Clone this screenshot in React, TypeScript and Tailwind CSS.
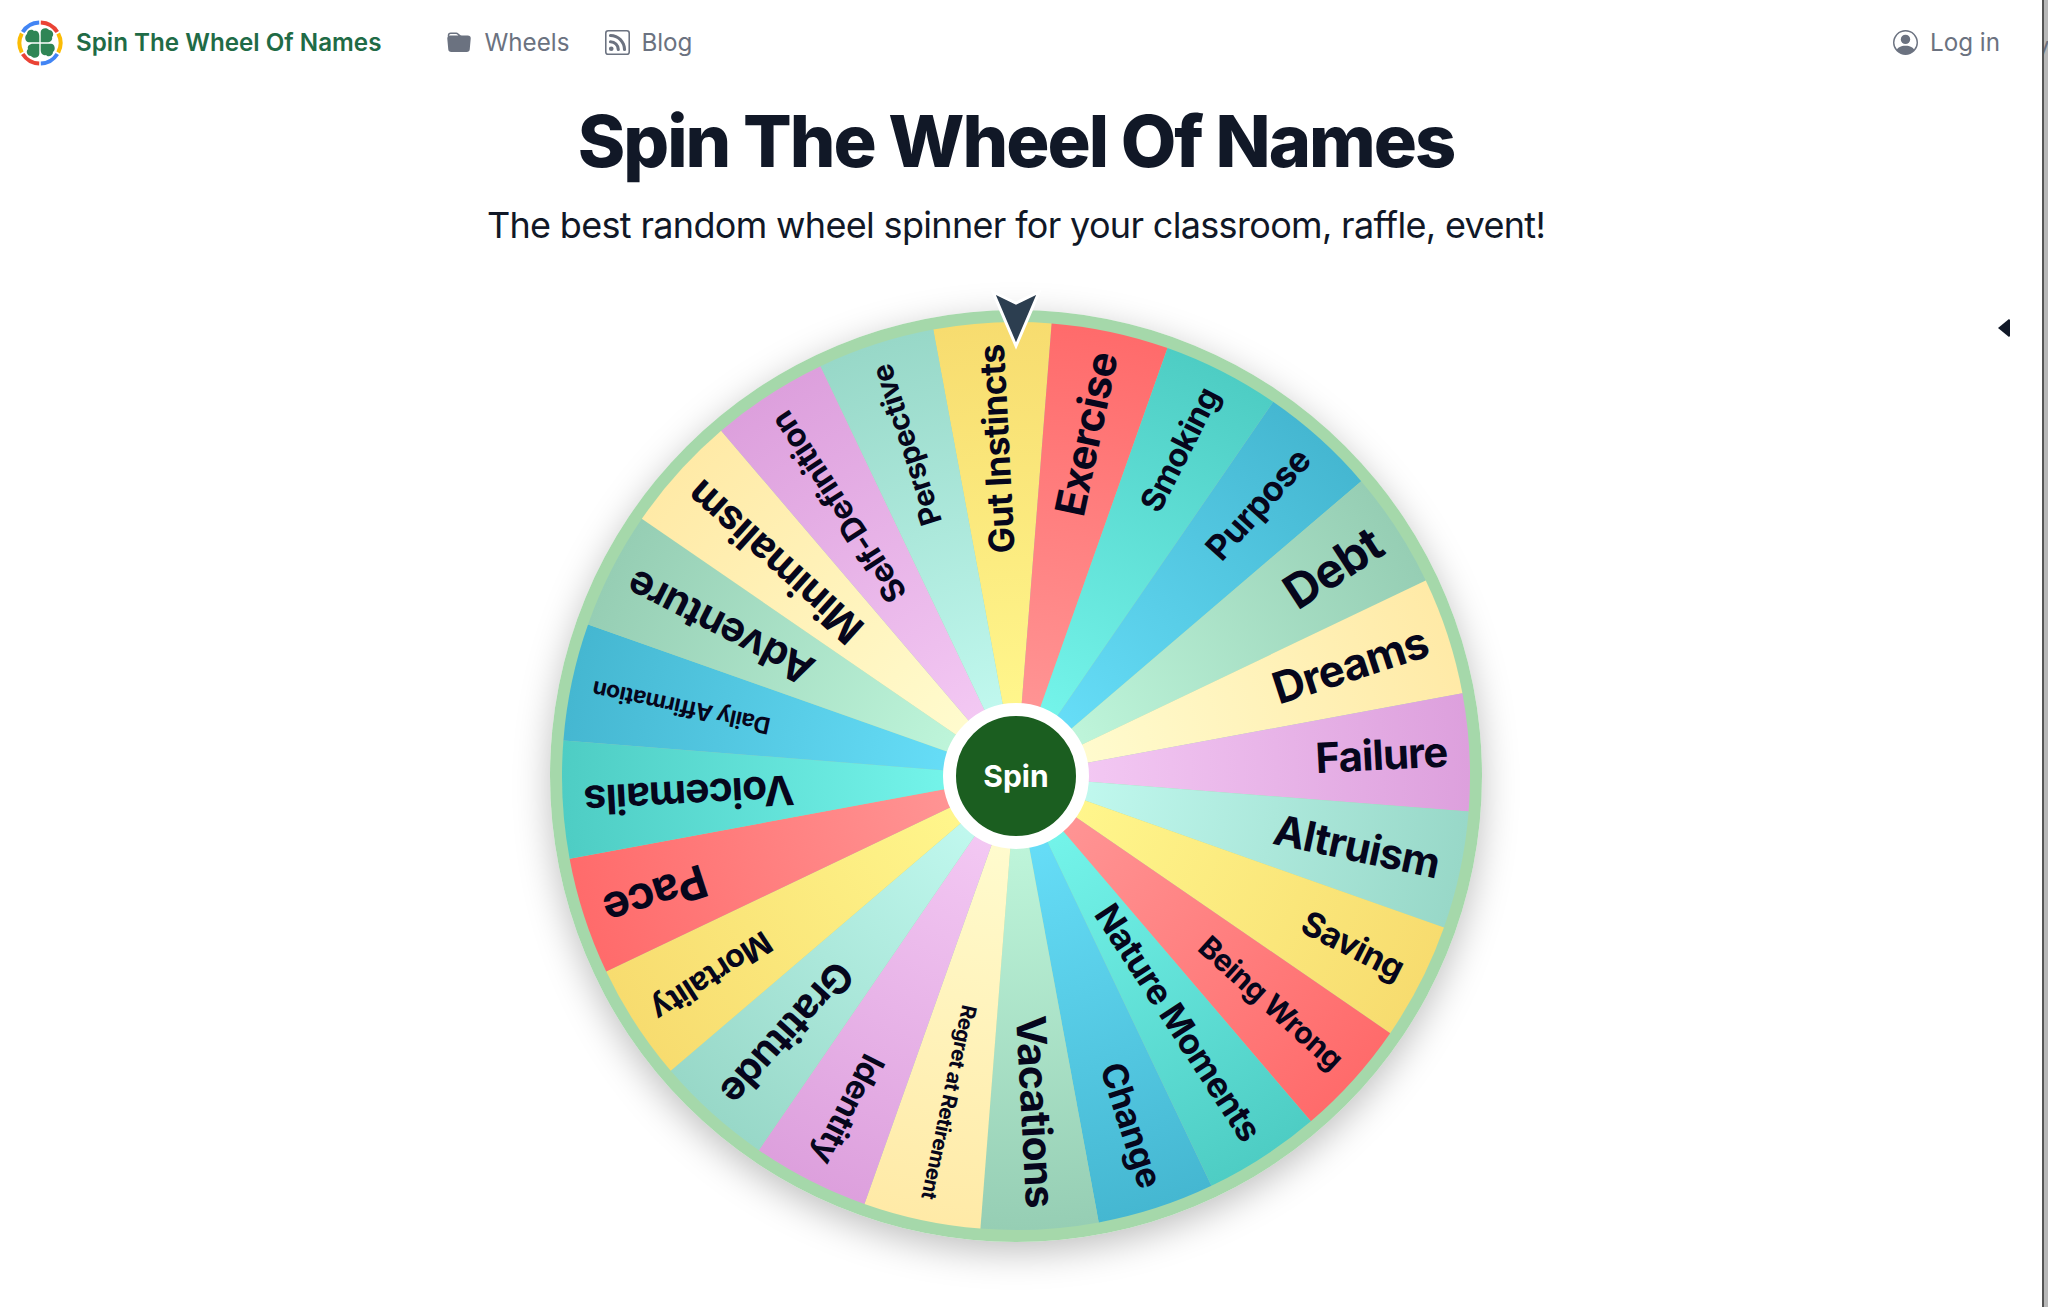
import React from 'react';
import { BsFolderFill, BsRss, BsPersonCircle } from 'react-icons/bs';

const WHEEL_R = 466;
const SLICE_R = 454;
const LABEL_R = 432;
const SLICE_DEG = 15;
const FIRST_ANGLE = -3;
const LABEL_TRACKING = -0.02;

// rim colour, hub colour
const PALETTE = [
  ['#F7DC6F', '#FFF68C'],
  ['#FF6B6B', '#FF9494'],
  ['#4ECDC4', '#74F4EA'],
  ['#45B7D1', '#66DDF7'],
  ['#96CEB4', '#BEF5DA'],
  ['#FFEAA7', '#FFFBCE'],
  ['#DDA0DD', '#F3C8F3'],
  ['#98D8C8', '#C0F8EE'],
];

// label and its length along the radius, in pixels
const ENTRIES: [string, number][] = [
  ['Gut Instincts', 209],
  ['Exercise', 166],
  ['Smoking', 134],
  ['Purpose', 136],
  ['Debt', 106],
  ['Dreams', 160],
  ['Failure', 132],
  ['Altruism', 168],
  ['Saving', 110],
  ['Being Wrong', 182],
  ['Nature Moments', 274],
  ['Change', 129],
  ['Vacations', 192],
  ['Regret at Retirement', 198],
  ['Identity', 118],
  ['Gratitude', 176],
  ['Mortality', 136],
  ['Pace', 105],
  ['Voicemails', 210],
  ['Daily Affirmation', 181],
  ['Adventure', 203],
  ['Minimalism', 220],
  ['Self-Definition', 220],
  ['Perspective', 167],
];

const measure = document.createElement('canvas').getContext('2d');

const fitFont = (label: string, length: number) => {
  if (!measure) return 30;
  measure.font = '700 100px Inter';
  return length / (measure.measureText(label).width / 100 + label.length * LABEL_TRACKING);
};

const point = (deg: number, r: number) => {
  const rad = (deg * Math.PI) / 180;
  return `${WHEEL_R + r * Math.sin(rad)} ${WHEEL_R - r * Math.cos(rad)}`;
};

const Wheel = () => (
  <svg viewBox="0 0 932 932" className="block w-full h-full">
    <defs>
      {PALETTE.map(([rim, hub], i) => (
        <radialGradient key={i} id={`slice-${i}`} gradientUnits="userSpaceOnUse" cx={WHEEL_R} cy={WHEEL_R} r={SLICE_R}>
          <stop offset="0.15" stopColor={hub} />
          <stop offset="1" stopColor={rim} />
        </radialGradient>
      ))}
    </defs>
    <circle cx={WHEEL_R} cy={WHEEL_R} r={WHEEL_R} fill="#A5D8AA" />
    {ENTRIES.map(([label], i) => {
      const mid = FIRST_ANGLE + i * SLICE_DEG;
      const from = mid - SLICE_DEG / 2;
      const to = mid + SLICE_DEG / 2;
      return (
        <path
          key={label}
          d={`M${WHEEL_R} ${WHEEL_R} L${point(from, SLICE_R)} A${SLICE_R} ${SLICE_R} 0 0 1 ${point(to, SLICE_R)} Z`}
          fill={`url(#slice-${i % PALETTE.length})`}
        />
      );
    })}
    {ENTRIES.map(([label, length], i) => (
      <text
        key={label}
        x={WHEEL_R + LABEL_R}
        y={WHEEL_R - 2.5}
        textAnchor="end"
        dominantBaseline="central"
        fontSize={fitFont(label, length)}
        transform={`rotate(${FIRST_ANGLE + i * SLICE_DEG - 90} ${WHEEL_R} ${WHEEL_R})`}
        className="font-bold tracking-[-0.02em] fill-[#06061c]"
      >
        {label}
      </text>
    ))}
  </svg>
);

const Logo = () => (
  <svg viewBox="0 0 48 48" className="w-12 h-12 shrink-0">
    <g fill="none" strokeWidth="4">
      <path d="M24.8 3.5 A20.5 20.5 0 0 1 41.3 13" stroke="#EA4335" />
      <path d="M42.2 14.5 A20.5 20.5 0 0 1 42.2 33.5" stroke="#FBBC05" />
      <path d="M41.3 35 A20.5 20.5 0 0 1 24.8 44.5" stroke="#4285F4" />
      <path d="M23.2 44.5 A20.5 20.5 0 0 1 6.7 35" stroke="#EA4335" />
      <path d="M5.8 33.5 A20.5 20.5 0 0 1 5.8 14.5" stroke="#FBBC05" />
      <path d="M6.7 13 A20.5 20.5 0 0 1 23.2 3.5" stroke="#4285F4" />
    </g>
    <g fill="#2F8555">
      {[0, 90, 180, 270].map((r) => (
        <path key={r} d="M24.7 23.3 V13 C24.7 9 31 8 33 11 C37 11 38.5 16 36 18 C37 21 34.5 23.3 31 23.3 Z" transform={`rotate(${r} 24 24)`} />
      ))}
    </g>
  </svg>
);

export default function App() {
  return (
    <div className="flex w-full h-[1307px] overflow-hidden bg-white [font-family:Inter,sans-serif]">
      <div className="relative w-[2032px] shrink-0 flex flex-col items-center">
        <header className="w-full h-[86px] flex items-center pl-4 pr-[32px] text-[24.2px] text-[#6b7280]">
          <Logo />
          <span className="ml-3 font-semibold text-[#1f6b46]">Spin The Wheel Of Names</span>
          <a className="ml-[66px] flex items-center gap-[13px]">
            <BsFolderFill size={24} />
            Wheels
          </a>
          <a className="ml-9 flex items-center gap-[11px]">
            <BsRss size={25} />
            Blog
          </a>
          <a className="ml-auto flex items-center gap-[12px]">
            <BsPersonCircle size={25} />
            Log in
          </a>
        </header>

        <h1 className="mt-[19px] text-7xl leading-none font-extrabold tracking-[-2.03px] text-[#111827]">Spin The Wheel Of Names</h1>
        <p className="mt-[28px] text-4xl leading-10 tracking-[-0.67px] text-[#111827]">The best random wheel spinner for your classroom, raffle, event!</p>

        <div className="relative mt-[65px] w-[932px] h-[932px] rounded-full shadow-[0_10px_36px_rgba(0,0,0,0.25)]">
          <Wheel />
          <svg viewBox="0 0 50 60" className="absolute left-[441px] top-[-20px] w-[50px] h-[60px]">
            <path d="M2 2 L25 13 L48 2 L25 56 Z" fill="#2C3E50" stroke="#fff" strokeWidth="3" strokeLinejoin="miter" />
          </svg>
          <button className="absolute left-[393px] top-[393px] w-[146px] h-[146px] rounded-full border-[13px] border-white bg-[#1B5E20] text-[30px] font-bold text-white">
            Spin
          </button>
        </div>

        <svg viewBox="0 0 12 18" className="absolute left-[1998px] top-[319px] w-3 h-[18px]">
          <path d="M12 1 V17 L11 18 L0 9 L11 0 Z" fill="#111827" />
        </svg>
      </div>

      <div className="w-[10px] shrink-0" />
      <div className="relative flex-1 overflow-hidden border-l-2 border-[#555] bg-[#b8b8b8]">
        <span className="absolute left-[-8px] top-[28px] text-[24px] text-[#6b7280]">y</span>
      </div>
    </div>
  );
}
